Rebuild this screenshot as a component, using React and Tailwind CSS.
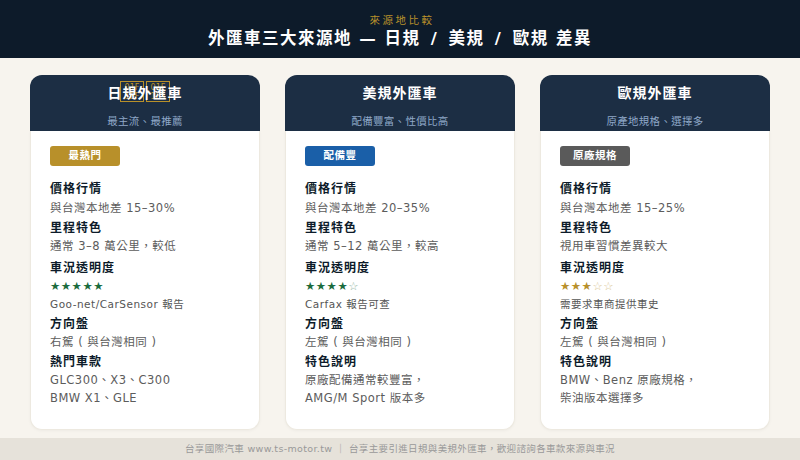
const FONT = "font-['DejaVu_Sans','Noto_Sans_CJK_TC',sans-serif]";

const cards = [
  {
    title: "日規外匯車",
    flag: true,
    sub: "最主流、最推薦",
    badge: "最熱門",
    badgeColor: "bg-[#b8902a]",
    price: "與台灣本地差 15–30%",
    mileage: "通常 3–8 萬公里，較低",
    stars: "★★★★★",
    empty: "",
    starColor: "text-[#1a6b3c]",
    report: "Goo-net/CarSensor 報告",
    wheel: "右駕 ( 與台灣相同 )",
    lastLabel: "熱門車款",
    last: ["GLC300、X3、C300", "BMW X1、GLE"],
  },
  {
    title: "美規外匯車",
    sub: "配備豐富、性價比高",
    badge: "配備豐",
    badgeColor: "bg-[#1a5fa8]",
    price: "與台灣本地差 20–35%",
    mileage: "通常 5–12 萬公里，較高",
    stars: "★★★★",
    empty: "☆",
    starColor: "text-[#1a6b3c]",
    report: "Carfax 報告可查",
    wheel: "左駕 ( 與台灣相同 )",
    lastLabel: "特色說明",
    last: ["原廠配備通常較豐富，", "AMG/M Sport 版本多"],
  },
  {
    title: "歐規外匯車",
    sub: "原產地規格、選擇多",
    badge: "原廠規格",
    badgeColor: "bg-[#5a5a5a]",
    price: "與台灣本地差 15–25%",
    mileage: "視用車習慣差異較大",
    stars: "★★★",
    empty: "☆☆",
    starColor: "text-[#b8902a]",
    report: "需要求車商提供車史",
    wheel: "左駕 ( 與台灣相同 )",
    lastLabel: "特色說明",
    last: ["BMW、Benz 原廠規格，", "柴油版本選擇多"],
  },
];

function Label({ children }) {
  return (
    <div className="text-[12px] leading-[18px] font-bold tracking-[1px] text-[#0d1b2a]">
      {children}
    </div>
  );
}

function Value({ children }) {
  return (
    <div className="text-[11.5px] leading-[18px] tracking-[0.5px] text-[#5c5c5c]">
      {children}
    </div>
  );
}

// missing-glyph boxes that sit behind the first card's title
function FlagBox({ top, bottom }) {
  return (
    <div className="w-[24px] h-[21px] border border-[#b8902a] flex flex-col items-center justify-center text-[8px] leading-[9px] text-[#b8902a]">
      <div>{top}</div>
      <div>{bottom}</div>
    </div>
  );
}

function SourceCard({ card }) {
  return (
    <div className="flex-1 flex flex-col">
      <div className="relative h-[56px] rounded-t-xl bg-[#1c2e44] flex flex-col items-center">
        {card.flag && (
          <div className="absolute left-[90px] top-[6px] flex gap-[2px]">
            <FlagBox top="01F" bottom="1EF" />
            <FlagBox top="01F" bottom="1F5" />
          </div>
        )}
        <div className="relative mt-[8px] text-[14px] leading-5 font-bold tracking-[1px] text-white">
          {card.title}
        </div>
        <div className="mt-[10px] text-[10.5px] leading-4 tracking-[0.3px] text-[#8fa8c8]">
          {card.sub}
        </div>
      </div>
      <div className="flex-1 rounded-b-xl bg-white border-x border-b border-[#ede9e0] px-[19px] pt-[15px] shadow-[0_1px_3px_rgba(0,0,0,0.04)]">
        <div
          className={`w-[70px] h-5 rounded-[3px] flex items-center justify-center text-[10.5px] font-bold tracking-[0.5px] text-white ${card.badgeColor}`}
        >
          {card.badge}
        </div>
        <div className="mt-[14px] flex flex-col">
          <Label>價格行情</Label>
          <div className="mt-[1px]">
            <Value>{card.price}</Value>
          </div>
          <div className="mt-[2px]">
            <Label>里程特色</Label>
          </div>
          <Value>{card.mileage}</Value>
          <div className="mt-[4px]">
            <Label>車況透明度</Label>
          </div>
          <div className={`text-[11.5px] leading-[18px] tracking-[0.5px] ${card.starColor}`}>
            {card.stars}
            <span className="opacity-50">{card.empty}</span>
          </div>
          <div className="text-[10.5px] leading-[18px] tracking-[0.5px] text-[#555]">
            {card.report}
          </div>
          <div className="mt-[2px]">
            <Label>方向盤</Label>
          </div>
          <Value>{card.wheel}</Value>
          <div className="mt-[2px]">
            <Label>{card.lastLabel}</Label>
          </div>
          <Value>{card.last[0]}</Value>
          <Value>{card.last[1]}</Value>
        </div>
      </div>
    </div>
  );
}

export default function App() {
  return (
    <div className={`w-[800px] h-[460px] flex flex-col overflow-hidden bg-[#f7f4ee] ${FONT}`}>
      <header className="h-[58px] bg-[#0d1b2a] flex flex-col items-center pt-[12px]">
        <div className="ml-[4px] text-[10.5px] leading-4 tracking-[2.5px] text-[#b8902a]">來源地比較</div>
        <h1 className="mt-[1px] text-[16.5px] leading-5 font-bold tracking-[1.5px] text-white">
          外匯車三大來源地 — 日規 <span className="mx-[3px]">/</span> 美規{" "}
          <span className="mx-[3px]">/</span> 歐規 差異
        </h1>
      </header>
      <main className="flex-1 flex gap-[25px] px-[30px] pt-[17px] pb-[8px]">
        {cards.map((card) => (
          <SourceCard key={card.title} card={card} />
        ))}
      </main>
      <footer className="h-[22px] bg-[#e6e2da] flex items-center justify-center text-[9.5px] tracking-[0.35px] text-[#999]">
        台享國際汽車 www.ts-motor.tw ｜ 台享主要引進日規與美規外匯車，歡迎諮詢各車款來源與車況
      </footer>
    </div>
  );
}
